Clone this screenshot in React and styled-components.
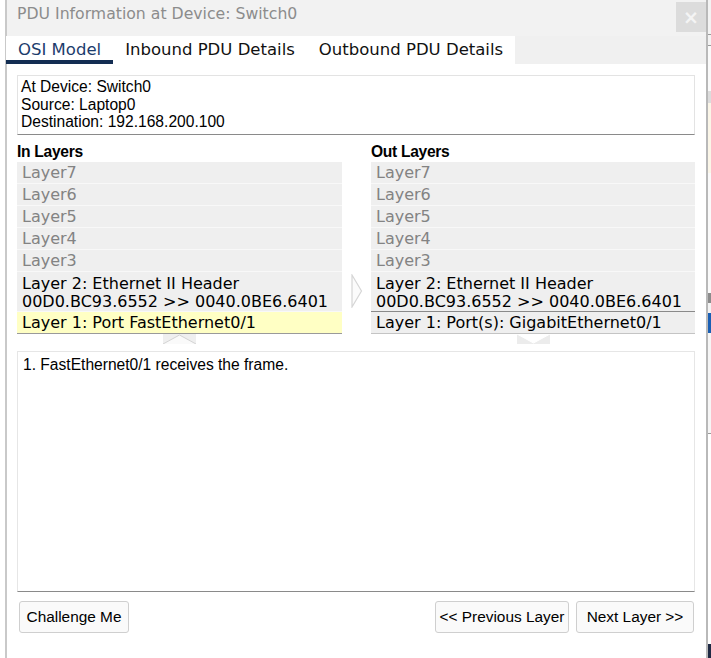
import React from "react";
import styled, { createGlobalStyle } from "styled-components";

const Global = createGlobalStyle`
  html, body { margin: 0; padding: 0; background: #ffffff; }
  body { width: 711px; height: 658px; overflow: hidden; }
  #root { height: 658px; }
`;

const Page = styled.div`
  display: flex;
  height: 658px;
  width: 711px;
`;

const LeftBackdrop = styled.div`
  width: 5px;
  background: #ffffff;
`;

const RightBackdrop = styled.div`
  flex: 1;
  display: flex;
  flex-direction: column;
  background: #f6f6f6;
`;

const BackBlock = styled.div`
  height: ${(p) => p.$h}px;
  background: ${(p) => p.$c};
`;

const Dialog = styled.div`
  width: 699px;
  border-left: 2px solid #c9c9c9;
  border-right: 2px solid #b9b9b9;
  display: flex;
  flex-direction: column;
  background: #ffffff;
`;

const TitleBar = styled.div`
  height: 36px;
  background: #f2f2f2;
  display: flex;
  align-items: flex-start;
  justify-content: space-between;
`;

const Title = styled.div`
  font-family: "DejaVu Sans", sans-serif;
  font-size: 15.7px;
  color: #8c8c8c;
  padding: 4px 0 0 10px;
  line-height: 20px;
`;

const CloseButton = styled.div`
  width: 30px;
  height: 30px;
  margin-top: 2px;
  background: #dcdcdc;
  color: #f4f4f4;
  font-family: "DejaVu Sans", sans-serif;
  font-weight: bold;
  font-size: 19px;
  display: flex;
  align-items: center;
  justify-content: center;
`;

const TabStrip = styled.div`
  display: flex;
  height: 28px;
  background: #f0f0f0;
`;

const Tab = styled.div`
  background: #ffffff;
  padding: 3px 12px 0;
  font-family: "DejaVu Sans", sans-serif;
  font-size: 16.5px;
  line-height: 21px;
  color: ${(p) => (p.$active ? "#1c3c6c" : "#111111")};
  border-bottom: 4px solid ${(p) => (p.$active ? "#132d52" : "#ffffff")};
  margin-left: ${(p) => (p.$first ? "-1px" : "0")};
`;

const Body = styled.div`
  flex: 1;
  display: flex;
  flex-direction: column;
  padding: 11px 11px 0 10px;
`;

const InfoBox = styled.div`
  border: 1px solid #e3e3e3;
  border-bottom: 1px solid #8a8a8a;
  padding: 2px 3px;
  font-family: "Liberation Sans", Arial, sans-serif;
  font-size: 15.6px;
  line-height: 17.5px;
  color: #000;
  box-sizing: border-box;
  height: 60px;
`;

const Layers = styled.div`
  display: grid;
  grid-template-columns: 325px 29px 1fr;
  margin-top: 6px;
`;

const Column = styled.div`
  display: flex;
  flex-direction: column;
`;

const Heading = styled.div`
  font-family: "Liberation Sans", Arial, sans-serif;
  font-weight: bold;
  font-size: 15.6px;
  line-height: 21px;
  color: #000;
  letter-spacing: -0.3px;
`;

const Row = styled.div`
  font-family: "DejaVu Sans", sans-serif;
  font-size: 16px;
  line-height: ${(p) => (p.$tall ? "17.5px" : "21px")};
  padding: ${(p) => (p.$tall ? "3px 5px 1px" : "0 5px")};
  background: ${(p) => (p.$hl ? "#ffffc4" : "#efefef")};
  color: ${(p) => (p.$dim ? "#838383" : "#000")};
  border-bottom: 1px solid ${(p) => p.$line || "#f8f8f8"};
  white-space: nowrap;
`;

const ArrowCell = styled.div`
  display: flex;
  align-items: flex-start;
  justify-content: center;
  padding-top: 133px;
`;

const Nudge = styled.div`
  display: flex;
  justify-content: center;
  height: 10px;
`;

const Description = styled.div`
  margin-top: 7px;
  height: 241px;
  box-sizing: border-box;
  border: 1px solid #e6e6e6;
  border-bottom: 1px solid #8a8a8a;
  padding: 4px 5px;
  font-family: "Liberation Sans", Arial, sans-serif;
  font-size: 15.6px;
  line-height: 18px;
  color: #000;
`;

const ButtonRow = styled.div`
  display: flex;
  align-items: center;
  margin-top: 9px;
  padding-left: 2px;
  gap: 7px;
`;

const Spacer = styled.div`
  flex: 1;
`;

const Button = styled.div`
  width: ${(p) => p.$w}px;
  height: 32px;
  box-sizing: border-box;
  border: 1px solid #cfcfcf;
  border-radius: 3px;
  background: #fafafa;
  font-family: "Liberation Sans", Arial, sans-serif;
  font-size: 15.4px;
  color: #000;
  display: flex;
  align-items: center;
  justify-content: center;
  white-space: nowrap;
  margin-right: ${(p) => p.$mr || 0}px;
`;

const RightChevron = () => (
  <svg width="12" height="34" viewBox="0 0 12 34">
    <polygon points="1,1 10.5,17 1,33" fill="#fbfbfb" stroke="#d6d6d6" strokeWidth="1.2" />
  </svg>
);

const UpNudge = () => (
  <svg width="33" height="10" viewBox="0 0 33 10">
    <rect x="0" y="0" width="33" height="10" fill="#efefef" />
    <polyline points="0,10 16.5,1 33,10" fill="#fafafa" stroke="#d4d4d4" strokeWidth="1" />
  </svg>
);

const DownNudge = () => (
  <svg width="33" height="10" viewBox="0 0 33 10">
    <rect x="0" y="0" width="33" height="10" fill="#ececec" />
    <polyline points="0,0 16.5,9 33,0" fill="#ffffff" stroke="#ffffff" strokeWidth="1" />
  </svg>
);

const upper = ["Layer7", "Layer6", "Layer5", "Layer4", "Layer3"];

export default function App() {
  return (
    <>
      <Global />
      <Page>
        <LeftBackdrop />
        <Dialog>
          <TitleBar>
            <Title>PDU Information at Device: Switch0</Title>
            <CloseButton>×</CloseButton>
          </TitleBar>
          <TabStrip>
            <Tab $active $first>OSI Model</Tab>
            <Tab>Inbound PDU Details</Tab>
            <Tab>Outbound PDU Details</Tab>
          </TabStrip>
          <Body>
            <InfoBox>
              At Device: Switch0
              <br />
              Source: Laptop0
              <br />
              Destination: 192.168.200.100
            </InfoBox>
            <Layers>
              <Column>
                <Heading>In Layers</Heading>
                {upper.map((l) => (
                  <Row key={l} $dim>
                    {l}
                  </Row>
                ))}
                <Row $tall>
                  Layer 2: Ethernet II Header
                  <br />
                  00D0.BC93.6552 &gt;&gt; 0040.0BE6.6401
                </Row>
                <Row $hl $line="#9a9a9a">
                  Layer 1: Port FastEthernet0/1
                </Row>
                <Nudge>
                  <UpNudge />
                </Nudge>
              </Column>
              <ArrowCell>
                <RightChevron />
              </ArrowCell>
              <Column>
                <Heading>Out Layers</Heading>
                {upper.map((l) => (
                  <Row key={l} $dim>
                    {l}
                  </Row>
                ))}
                <Row $tall $line="#8a8a8a">
                  Layer 2: Ethernet II Header
                  <br />
                  00D0.BC93.6552 &gt;&gt; 0040.0BE6.6401
                </Row>
                <Row $line="#c4c4c4">Layer 1: Port(s): GigabitEthernet0/1</Row>
                <Nudge>
                  <DownNudge />
                </Nudge>
              </Column>
            </Layers>
            <Description>1. FastEthernet0/1 receives the frame.</Description>
            <ButtonRow>
              <Button $w={110}>Challenge Me</Button>
              <Spacer />
              <Button $w={134}>&lt;&lt; Previous Layer</Button>
              <Button $w={118} $mr={1}>Next Layer &gt;&gt;</Button>
            </ButtonRow>
          </Body>
        </Dialog>
        <RightBackdrop>
          <BackBlock $h={34} $c="#f3f3f3" />
          <BackBlock $h={1} $c="#9a9a9a" />
          <BackBlock $h={10} $c="#f3f3f3" />
          <BackBlock $h={1} $c="#9a9a9a" />
          <BackBlock $h={45} $c="#fafafa" />
          <BackBlock $h={12} $c="#dcdcdc" />
          <BackBlock $h={70} $c="#fbf6e8" />
          <BackBlock $h={120} $c="#fafafa" />
          <BackBlock $h={10} $c="#8c8c8c" />
          <BackBlock $h={10} $c="#f3f3f3" />
          <BackBlock $h={20} $c="#1a5fb4" />
          <BackBlock $h={100} $c="#f6f6f6" />
          <BackBlock $h={1} $c="#9a9a9a" />
          <BackBlock $h={210} $c="#ffffff" />
          <BackBlock $h={14} $c="#1f2a44" />
        </RightBackdrop>
      </Page>
    </>
  );
}
